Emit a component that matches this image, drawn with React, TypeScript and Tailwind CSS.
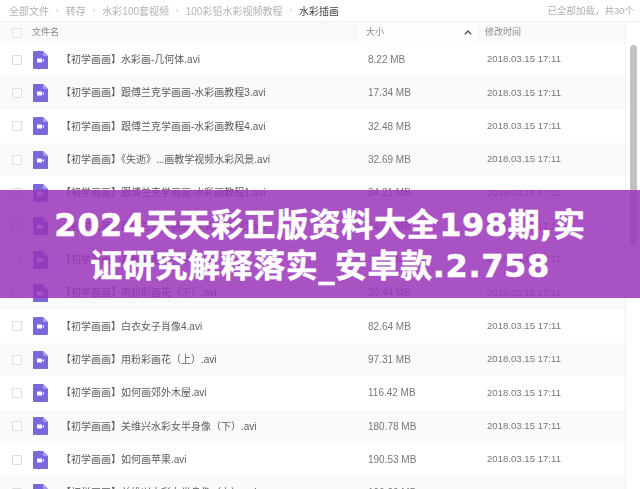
const FONT = "font-['Liberation_Sans','Noto_Sans_CJK_SC',sans-serif]";

const CRUMBS = ["全部文件", "转存", "水彩100套视频", "100彩铅水彩视频教程"];

const ROWS = [
  { name: "水彩画-几何体.avi", size: "8.22 MB" },
  { name: "跟傅兰克学画画-水彩画教程3.avi", size: "17.34 MB" },
  { name: "跟傅兰克学画画-水彩画教程4.avi", size: "32.48 MB" },
  { name: "《失逝》...画教学视频水彩风景.avi", size: "32.69 MB" },
  { name: "跟傅兰克学画画-水彩画教程1.avi", size: "34.21 MB" },
  { name: "跟傅兰克学画画-水彩画教程2.avi", size: "34.31 MB" },
  { name: "用粉彩画花（中）.avi", size: "35.03 MB" },
  { name: "用粉彩画花（下）.avi", size: "39.44 MB" },
  { name: "白衣女子肖像4.avi", size: "82.64 MB" },
  { name: "用粉彩画花（上）.avi", size: "97.31 MB" },
  { name: "如何画郊外木屋.avi", size: "116.42 MB" },
  { name: "关维兴水彩女半身像（下）.avi", size: "180.78 MB" },
  { name: "如何画苹果.avi", size: "190.53 MB" },
  { name: "关维兴水彩女半身像（上）.avi", size: "196.20 MB" },
];

function VideoIcon() {
  return (
    <svg width="15" height="18" viewBox="0 0 15 18" className="shrink-0">
      <path d="M1 0H10L15 5V17a1 1 0 0 1-1 1H1a1 1 0 0 1-1-1V1a1 1 0 0 1 1-1Z" fill="#7b68d8" />
      <path d="M10 0L15 5H11a1 1 0 0 1-1-1Z" fill="#a99be8" />
      <rect x="4" y="7.5" width="5" height="4" rx="0.6" fill="#fff" />
      <path d="M9.4 9.2L11 8.1V10.9L9.4 9.8Z" fill="#fff" />
    </svg>
  );
}

function Checkbox() {
  return <span className="block h-[10px] w-[10px] shrink-0 rounded-[1px] border border-[#dedede] bg-white" />;
}

export default function App() {
  return (
    <div className={`relative h-[489px] w-[640px] overflow-hidden bg-white ${FONT}`}>
      <div className="blur-[0.35px]">
        {/* Breadcrumb */}
        <div className="flex h-[22px] items-center border-b border-[#f0f0f0] pl-[9px] pr-[6px] pt-[1px] text-[10px] text-[#b4b4b4]">
          {CRUMBS.map((c) => (
            <span key={c} className="flex items-center">
              {c}
              <span className="mx-[7px] text-[8px] text-[#c4c4c4]">›</span>
            </span>
          ))}
          <span className="text-[#444]">水彩插画</span>
          <span className="ml-auto text-[9.5px] text-[#b0b0b0]">已全部加载，共30个</span>
        </div>

        {/* Table header */}
        <div className="mr-[15px] flex h-[21px] items-center bg-[#fafafa] pt-[1px] text-[9px] text-[#888]">
          <span className="ml-[12px] block h-[10px] w-[10px] rounded-[1px] border border-[#e4e4e4]" />
          <span className="ml-[10px] w-[326px]">文件名</span>
          <span className="flex h-full w-[119px] items-center bg-[#fdfdfd] pl-[8px]">大小</span>
          <span className="ml-[8px]">修改时间</span>
        </div>

        {/* Rows */}
        <div className="mr-[13px]">
          {ROWS.map((r, i) => (
            <div
              key={r.name}
              className={`flex h-[33.33px] items-center text-[10px] text-[#5c5c5c] ${i % 2 === 1 ? "bg-[#fafafa]" : "bg-white"}`}
            >
              <span className="ml-[12px] flex"><Checkbox /></span>
              <span className="ml-[11px] flex"><VideoIcon /></span>
              <span className="ml-[13px] w-[307px] whitespace-nowrap">【初学画画】{r.name}</span>
              <span className="w-[119px] text-[#777]">{r.size}</span>
              <span className="text-[9.6px] text-[#777]">2018.03.15 17:11</span>
            </div>
          ))}
        </div>
      </div>

      {/* Sort caret */}
      <svg width="8" height="5" viewBox="0 0 8 5" className="absolute left-[464px] top-[30px]">
        <path d="M0.8 4.2L4 1L7.2 4.2" fill="none" stroke="#555" strokeWidth="1.4" />
      </svg>

      {/* Scrollbar */}
      <div className="absolute bottom-0 right-0 top-[22px] w-[15px] border-l border-[#f0f0f0] bg-white pl-[4px] pt-[23px]">
        <div className="h-[200px] w-[7px] rounded-full bg-[#c2c2c2]" />
      </div>

      {/* Title banner */}
      <div className="absolute inset-x-0 top-[190px] flex h-[108px] items-center justify-center bg-[#9a34ba]/85 pt-[4px]">
        <h1 className="w-[560px] text-center font-['DejaVu_Sans','Noto_Sans_CJK_SC',sans-serif] text-[32px] font-bold leading-[41px] tracking-[0.6px] text-white [-webkit-text-stroke:0.5px_white]">
          2024天天彩正版资料大全198期,实证研究解释落实_安卓款.2.758
        </h1>
      </div>
    </div>
  );
}
